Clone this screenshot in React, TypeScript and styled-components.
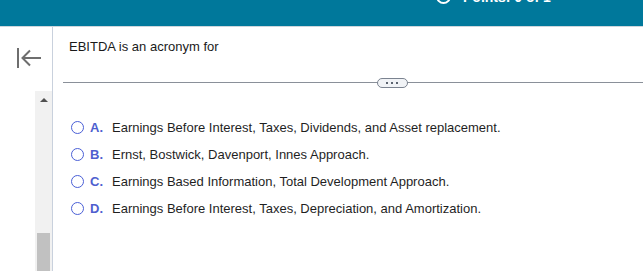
import styled, { createGlobalStyle } from "styled-components";

const GlobalStyle = createGlobalStyle`
  html, body {
    margin: 0;
    padding: 0;
    background: #ffffff;
    font-family: "Liberation Sans", Arial, sans-serif;
  }
  #root {
    height: 271px;
  }
`;

const OPTIONS = [
  { letter: "A.", text: "Earnings Before Interest, Taxes, Dividends, and Asset replacement." },
  { letter: "B.", text: "Ernst, Bostwick, Davenport, Innes Approach." },
  { letter: "C.", text: "Earnings Based Information, Total Development Approach." },
  { letter: "D.", text: "Earnings Before Interest, Taxes, Depreciation, and Amortization." },
];

export default function App() {
  return (
    <>
      <GlobalStyle />
      <S.Page>
        <S.Header>
          <S.Points>
            <S.PointsRing />
            <S.PointsText>Points: 0 of 1</S.PointsText>
          </S.Points>
        </S.Header>
        <S.Body>
          <S.Sidebar>
            <S.CollapseButton aria-label="collapse">
              <svg width="26" height="22" viewBox="0 0 26 22" fill="none">
                <path d="M2 1v20" stroke="#6e6e6e" strokeWidth="2" />
                <path d="M25 11H7M14 3.5L6.5 11l7.5 7.5" stroke="#6e6e6e" strokeWidth="2" />
              </svg>
            </S.CollapseButton>
            <S.Track>
              <S.UpArrow />
              <S.Thumb />
            </S.Track>
          </S.Sidebar>
          <S.Main>
            <S.Question>EBITDA is an acronym for</S.Question>
            <S.Divider>
              <S.MoreButton>
                <S.Dot />
                <S.Dot />
                <S.Dot />
              </S.MoreButton>
            </S.Divider>
            <S.Options>
              {OPTIONS.map((o) => (
                <S.Option key={o.letter}>
                  <S.Radio />
                  <S.Letter>{o.letter}</S.Letter>
                  <S.OptionText>{o.text}</S.OptionText>
                </S.Option>
              ))}
            </S.Options>
          </S.Main>
        </S.Body>
      </S.Page>
    </>
  );
}

const S = {
  Page: styled.div`
    display: flex;
    flex-direction: column;
    width: 643px;
    height: 271px;
    overflow: hidden;
  `,

  Header: styled.div`
    height: 26px;
    background-color: #00789b;
    border-bottom: 1px solid #cdd6dc;
    overflow: hidden;
  `,

  Points: styled.div`
    display: flex;
    align-items: center;
    gap: 12px;
    margin-top: -11px;
    padding-left: 436px;
  `,

  PointsRing: styled.span`
    width: 11px;
    height: 11px;
    border: 2px solid #ffffff;
    border-radius: 50%;
  `,

  PointsText: styled.span`
    color: #ffffff;
    font-size: 14px;
    font-weight: bold;
    line-height: 14px;
  `,

  Body: styled.div`
    display: flex;
    flex: 1;
    min-height: 0;
  `,

  Sidebar: styled.div`
    display: flex;
    flex-direction: column;
    width: 52px;
    border-right: 1px solid #c9d1dd;
  `,

  CollapseButton: styled.div`
    display: flex;
    height: 64px;
    padding: 20px 0 0 16px;
    box-sizing: border-box;
  `,

  Track: styled.div`
    display: flex;
    flex-direction: column;
    align-self: flex-end;
    justify-content: space-between;
    align-items: center;
    width: 17px;
    flex: 1;
    background-color: #f1f1f1;
  `,

  UpArrow: styled.span`
    margin-top: 7px;
    width: 0;
    height: 0;
    border-left: 4px solid transparent;
    border-right: 4px solid transparent;
    border-bottom: 4px solid #505050;
  `,

  Thumb: styled.span`
    width: 13px;
    height: 38px;
    background-color: #c1c1c1;
  `,

  Main: styled.div`
    display: flex;
    flex-direction: column;
    flex: 1;
    padding: 12px 0 0 10px;
  `,

  Question: styled.div`
    padding-left: 6px;
    font-size: 13px;
    line-height: 15px;
    color: #1a1a1a;
  `,

  Divider: styled.div`
    display: flex;
    justify-content: center;
    align-items: center;
    margin-top: 28px;
    height: 1px;
    background-color: #8a9099;
    padding-left: 78px;
  `,

  MoreButton: styled.div`
    display: flex;
    justify-content: center;
    align-items: center;
    gap: 3px;
    width: 29px;
    height: 8px;
    border: 1px solid #7b8390;
    border-radius: 5px;
    background-color: #f1f3f6;
  `,

  Dot: styled.span`
    width: 2px;
    height: 2px;
    background-color: #5c6470;
  `,

  Options: styled.div`
    display: flex;
    flex-direction: column;
    gap: 8px;
    margin-top: 35px;
    padding-left: 8px;
  `,

  Option: styled.div`
    display: flex;
    align-items: center;
    height: 19px;
  `,

  Radio: styled.span`
    width: 11px;
    height: 11px;
    border: 1.5px solid #4a5fd6;
    border-radius: 50%;
  `,

  Letter: styled.span`
    width: 22px;
    margin-left: 6px;
    font-size: 13px;
    font-weight: bold;
    color: #4e5fcf;
  `,

  OptionText: styled.span`
    font-size: 13px;
    color: #1f1f1f;
  `,
};
